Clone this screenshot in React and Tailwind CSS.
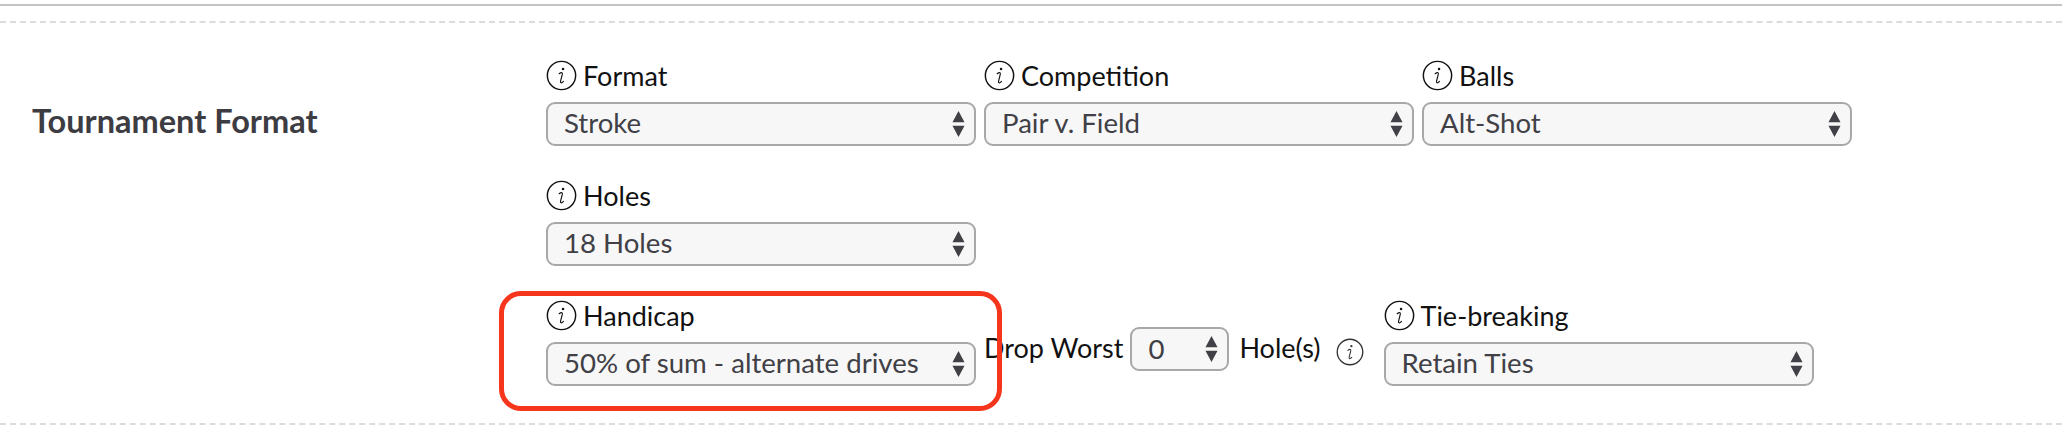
import React from 'react'

function InfoIcon({ className }) {
  return (
    <svg viewBox="0 0 32 32" fill="none" className={className}>
      <circle cx="16" cy="16" r="14.6" stroke="currentColor" strokeWidth="1.5" />
      <circle cx="17.6" cy="9.4" r="1.3" fill="currentColor" />
      <path
        d="M13.6 14.2c1.2-1 2.6-1.3 3.1-.9.5.4.2 1.3-.1 2.4l-1.5 5.8c-.3 1.2-.3 1.8.3 2 .6.2 1.7-.4 2.6-1.4"
        stroke="currentColor"
        strokeWidth="1.2"
        strokeLinecap="round"
      />
    </svg>
  )
}

function Dropdown({ value, className }) {
  return (
    <div className={`relative h-[44px] rounded-[9px] border-2 border-[#a8a8a8] bg-[#f7f7f7] ${className}`}>
      <select
        defaultValue={value}
        className="h-[37px] w-full appearance-none bg-transparent pl-[16px] text-[27.6px] leading-[34px] text-[#404046] outline-none"
      >
        <option>{value}</option>
      </select>
      <svg viewBox="0 0 14 28" className="pointer-events-none absolute right-[9px] top-[7px] h-[26px] w-[13px] fill-[#404046]">
        <path d="M7 0l6.5 12H.5zM.5 16h13L7 28z" />
      </svg>
    </div>
  )
}

function Field({ label, value, width = 'w-[430px]' }) {
  return (
    <div className={`flex flex-col ${width}`}>
      <div className="flex h-[26px] items-center gap-[6px] text-[27px] leading-none text-[#111]">
        <InfoIcon className="h-[31px] w-[31px] shrink-0" />
        <span>{label}</span>
      </div>
      <Dropdown value={value} className="mt-[14px] w-full" />
    </div>
  )
}

export default function App() {
  return (
    <div className="relative h-[444px] w-full overflow-hidden bg-white font-['Lato',sans-serif]">
      <div className="h-[6px] border-b-2 border-[#c4c4c4]" />
      <div className="mt-[15px] border-t-2 border-dashed border-[#dcdcdc]" />

      <div className="flex h-[400px] items-start">
        <div className="w-[546px] shrink-0 pl-[32px] pt-[80px]">
          <h2 className="text-[32.5px] font-bold leading-[36px] text-[#3c3c42]">Tournament Format</h2>
        </div>

        <div className="flex flex-col gap-[36px] pt-[39px]">
          <div className="flex gap-[8px]">
            <Field label="Format" value="Stroke" />
            <Field label="Competition" value="Pair v. Field" />
            <Field label="Balls" value="Alt-Shot" />
          </div>

          <div className="flex">
            <Field label="Holes" value="18 Holes" />
          </div>

          <div className="flex items-start">
            <Field label="Handicap" value="50% of sum - alternate drives" />
            <div className="ml-[8px] mt-[25px] flex h-[44px] items-center text-[27px] text-[#111]">
              <span className="-translate-y-px">Drop Worst</span>
              <Dropdown value="0" className="ml-[7px] w-[99px]" />
              <span className="ml-[10px] -translate-y-px">Hole(s)</span>
              <InfoIcon className="ml-[15px] mt-[6px] h-[28px] w-[28px] text-[#333]" />
            </div>
            <Field label="Tie-breaking" value="Retain Ties" width="ml-[20px] w-[430px]" />
          </div>
        </div>
      </div>

      <div className="border-t-2 border-dashed border-[#dcdcdc]" />

      {/* annotation drawn over the handicap field */}
      <div className="pointer-events-none absolute left-[499px] top-[291px] h-[120px] w-[503px] rounded-[22px] border-[5px] border-[#f5361c]" />
    </div>
  )
}
